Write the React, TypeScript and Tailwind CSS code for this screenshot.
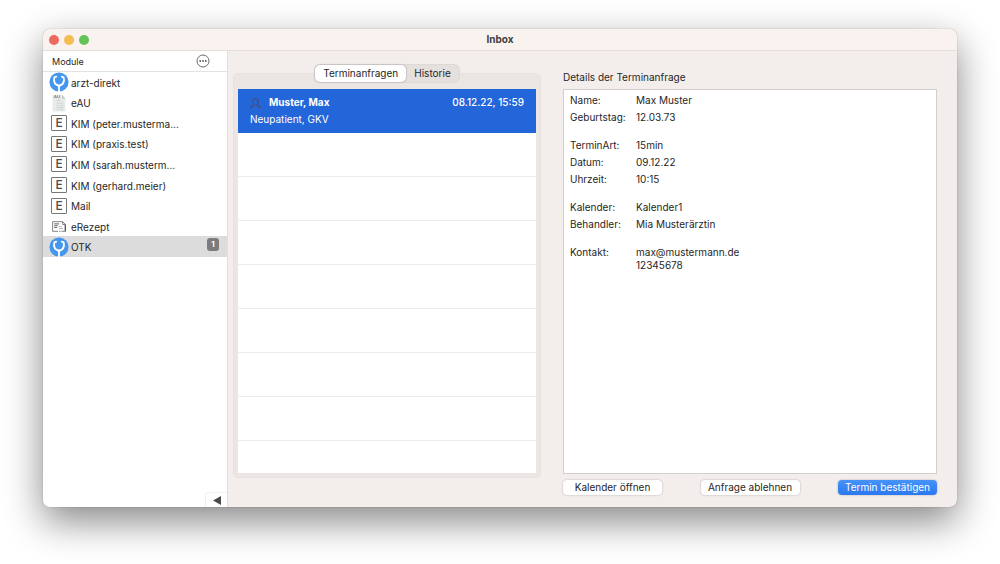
import React, { useState } from 'react';
import clsx from 'clsx';

type IconKind = 'direkt' | 'eau' | 'letter' | 'rezept';

interface ModuleItem {
  name: string;
  icon: IconKind;
  count?: number;
}

const modules: ModuleItem[] = [
  { name: 'arzt-direkt', icon: 'direkt' },
  { name: 'eAU', icon: 'eau' },
  { name: 'KIM (peter.musterma...', icon: 'letter' },
  { name: 'KIM (praxis.test)', icon: 'letter' },
  { name: 'KIM (sarah.musterm...', icon: 'letter' },
  { name: 'KIM (gerhard.meier)', icon: 'letter' },
  { name: 'Mail', icon: 'letter' },
  { name: 'eRezept', icon: 'rezept' },
  { name: 'OTK', icon: 'direkt', count: 1 },
];

const details: { label: string; value: string[] }[][] = [
  [
    { label: 'Name:', value: ['Max Muster'] },
    { label: 'Geburtstag:', value: ['12.03.73'] },
  ],
  [
    { label: 'TerminArt:', value: ['15min'] },
    { label: 'Datum:', value: ['09.12.22'] },
    { label: 'Uhrzeit:', value: ['10:15'] },
  ],
  [
    { label: 'Kalender:', value: ['Kalender1'] },
    { label: 'Behandler:', value: ['Mia Musterärztin'] },
  ],
  [{ label: 'Kontakt:', value: ['max@mustermann.de', '12345678'] }],
];

const tabs = ['Terminanfragen', 'Historie'];

const ModuleIcon: React.FC<{ kind: IconKind }> = ({ kind }) => {
  if (kind === 'direkt') {
    return (
      <svg width="20" height="20" viewBox="0 0 20 20" fill="none">
        <circle cx="10" cy="10" r="9.6" fill="#4496ee" />
        <path d="M7.2 4.6 5.3 5.4C4.3 9.8 6 13.4 10 13.4s5.7-3.6 4.7-8l-1.9-.8" stroke="#fff" strokeWidth="1.8" strokeLinecap="round" strokeLinejoin="round" />
        <path d="M8.2 13h3.6l-.9 2v5H9.1v-5z" fill="#fff" />
      </svg>
    );
  }
  if (kind === 'eau') {
    return (
      <svg width="14" height="18" viewBox="0 0 14 18">
        <path d="M.5 1h9.5l3.5 3.5V17.5H.5z" fill="#e9ebeb" />
        <path d="M10 1v3.5h3.5z" fill="#c3c8c9" />
        <path d="M2 4 3.3 1.2 4.6 4M2.5 3.1h1.6M5.6 1.2v1.7q0 1 1 1t1-1V1.2" stroke="#777" strokeWidth=".7" fill="none" />
        <path d="M4.5 6.5h4M4.5 9h7M4.5 11.3h2M7.5 11.3h4M4.5 13.5h7M4.5 15.6h2M7.5 15.6h4" stroke="#cdd2d2" strokeWidth="1" />
      </svg>
    );
  }
  if (kind === 'letter') {
    return (
      <span className="flex size-4 items-center justify-center rounded-[1px] border border-[#777] text-xs font-medium text-[#4c4c4c]">E</span>
    );
  }
  return (
    <svg width="14" height="11" viewBox="0 0 14 11" fill="none">
      <path d="M10.5.7H.6v9.6H6M7 10.3h1.5M9.5 10.3h3.9V3.4L10.7.7v2.8h2.5" stroke="#777" strokeWidth=".9" />
      <path d="M13.3 3.5v6.8" stroke="#555" strokeWidth="1.2" />
      <path d="M2.2 2.9h5M2.2 4.7h3.5M2.2 6.5h3" stroke="#666" strokeWidth="1" />
      <path d="M6.5 5.5h3M7 7.5h4" stroke="#aaa" strokeWidth=".8" />
    </svg>
  );
};

const PersonIcon: React.FC = () => (
  <svg width="11" height="10" viewBox="0 0 11 10" fill="none" stroke="#43507a" strokeWidth="1.1">
    <path d="M3 9.4H.8C.8 7.9 2.2 7.4 4.1 6.9 3 5.9 2.8 4.6 2.9 3.2 3 1.4 4 .6 5.5.6s2.5.8 2.6 2.6c.1 1.4-.1 2.7-1.2 3.7 1.9.5 3.3 1 3.3 2.5H8" />
  </svg>
);

const App: React.FC = () => {
  const [activeModule, setActiveModule] = useState('OTK');
  const [activeTab, setActiveTab] = useState('Terminanfragen');

  return (
    <div className="flex min-h-screen bg-white px-[43px] pt-[29px] pb-[57px] font-[Inter,sans-serif] text-[10px] leading-[13px] text-[#262626]">
      <div className="flex flex-1 flex-col overflow-hidden rounded-[7px] bg-[#f3eeeb] shadow-[0_0_1px_rgba(0,0,0,0.5),0_14px_38px_rgba(0,0,0,0.48)]">
        <header className="grid h-[22px] grid-cols-3 items-center border-b border-[#e4dfdc] bg-[#f9f2ee] px-1.5">
          <div className="flex gap-[5px]">
            <span className="size-2.5 rounded-full bg-[#ed6a5e]" />
            <span className="size-2.5 rounded-full bg-[#f4bd4f]" />
            <span className="size-2.5 rounded-full bg-[#61c455]" />
          </div>
          <h1 className="text-center font-bold text-[#404040]">Inbox</h1>
        </header>

        <div className="flex flex-1">
          <aside className="flex w-[185px] shrink-0 flex-col border-r border-[#e2dedc] bg-white">
            <div className="flex h-[21px] items-center justify-between border-b border-[#e2e2e2] pr-[17px] pl-[9px]">
              <h2 className="text-[9px]">Module</h2>
              <button aria-label="Weitere Optionen">
                <svg width="14" height="14" viewBox="0 0 14 14" fill="none">
                  <circle cx="7" cy="7" r="6" stroke="#6a6a6a" strokeWidth="1" />
                  <circle cx="4.2" cy="7" r=".9" fill="#555" />
                  <circle cx="7" cy="7" r=".9" fill="#555" />
                  <circle cx="9.8" cy="7" r=".9" fill="#555" />
                </svg>
              </button>
            </div>
            <nav className="grid h-[185px] auto-rows-fr">
              {modules.map(item => (
                <button
                  key={item.name}
                  onClick={() => setActiveModule(item.name)}
                  className={clsx('flex min-h-0 items-center pr-2 pl-1.5 text-left', activeModule === item.name && 'bg-[#dcdcdc]')}
                >
                  <span className="flex w-5 justify-center"><ModuleIcon kind={item.icon} /></span>
                  <span className="ml-0.5 flex-1 pt-0.5 whitespace-nowrap">{item.name}</span>
                  {item.count && (
                    <span className="mb-1 w-3 rounded-[3px] bg-[#7c7c7c] text-center text-[8px] font-bold text-white">{item.count}</span>
                  )}
                </button>
              ))}
            </nav>
            <button aria-label="Seitenleiste einklappen" className="mt-auto ml-auto flex h-[15px] w-[22px] items-center justify-center rounded-tl-sm border-t border-l border-[#f0f0f0]">
              <svg width="8" height="9" viewBox="0 0 8 9"><path d="M0 4.5 8 0v9z" fill="#4a4a4a" /></svg>
            </button>
          </aside>

          <main className="grid flex-1 grid-cols-[308px_1fr] gap-[22px] pr-5 pl-[5px]">
            <section className="flex flex-col pt-3.5 pb-[29px]">
              <div role="tablist" className="z-10 mx-auto flex h-[17px] rounded-[5px] bg-[#e5e0dd] ring-1 ring-[#ded9d6]">
                {tabs.map(tab => (
                  <button
                    key={tab}
                    role="tab"
                    aria-selected={activeTab === tab}
                    onClick={() => setActiveTab(tab)}
                    className={clsx('rounded-[5px] px-2', activeTab === tab && 'bg-white shadow-[0_0_2px_rgba(0,0,0,0.35)]')}
                  >
                    {tab}
                  </button>
                ))}
              </div>
              <div className="-mt-[9px] flex flex-1 flex-col rounded-[5px] border border-[#e7e2df] bg-[#ebe6e3] px-1 pt-[15px] pb-1">
                <div className="flex-1 bg-white">
                  <button className="flex h-11 w-full flex-col justify-center gap-1 bg-[#2366da] px-3 text-left text-white">
                    <span className="flex w-full items-center">
                      <PersonIcon />
                      <span className="ml-2 font-bold">Muster, Max</span>
                      <span className="ml-auto font-medium">08.12.22, 15:59</span>
                    </span>
                    <span>Neupatient, GKV</span>
                  </button>
                  {Array.from({ length: 7 }, (_, i) => (
                    <div key={i} className="h-11 border-b border-[#ececec]" />
                  ))}
                </div>
              </div>
            </section>

            <section className="flex flex-col pt-5 pb-3">
              <h2>Details der Terminanfrage</h2>
              <div className="mt-[5px] flex flex-1 flex-col gap-[15px] border border-[#d3cfcd] bg-white px-1.5 py-1">
                {details.map(group => (
                  <dl key={group[0].label} className="flex flex-col gap-1">
                    {group.map(row => (
                      <div key={row.label} className="flex">
                        <dt className="w-[66px]">{row.label}</dt>
                        <dd>
                          {row.value.map(line => <div key={line}>{line}</div>)}
                        </dd>
                      </div>
                    ))}
                  </dl>
                ))}
              </div>
              <div className="mt-1.5 flex justify-between">
                <button className="h-[15px] w-[99px] rounded-[4px] bg-white shadow-[0_0_2px_rgba(0,0,0,0.3)]">Kalender öffnen</button>
                <button className="h-[15px] w-[99px] rounded-[4px] bg-white shadow-[0_0_2px_rgba(0,0,0,0.3)]">Anfrage ablehnen</button>
                <button className="h-[15px] w-[99px] rounded-[4px] bg-linear-to-b from-[#4693f8] to-[#2b78f0] text-white shadow-[0_0_2px_rgba(0,0,0,0.3)]">Termin bestätigen</button>
              </div>
            </section>
          </main>
        </div>
      </div>
    </div>
  );
};

export default App;
